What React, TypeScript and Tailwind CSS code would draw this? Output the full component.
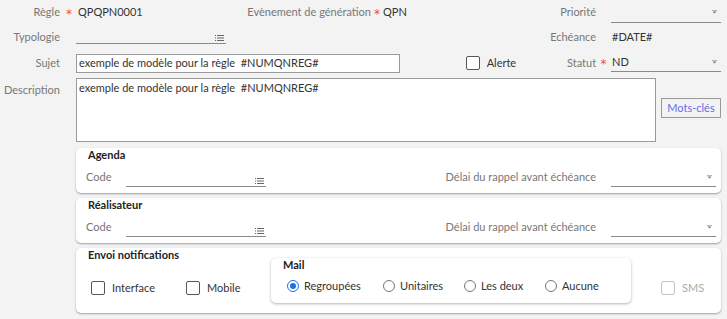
import React from "react";

const ListIcon = () => (
  <svg width="9" height="6" viewBox="0 0 9 6" className="text-[#666]">
    <rect x="0" y="0" width="1" height="1" fill="currentColor" />
    <rect x="0" y="2.5" width="1" height="1" fill="currentColor" />
    <rect x="0" y="5" width="1" height="1" fill="currentColor" />
    <rect x="2" y="0" width="7" height="1" fill="currentColor" />
    <rect x="2" y="2.5" width="7" height="1" fill="currentColor" />
    <rect x="2" y="5" width="7" height="1" fill="currentColor" />
  </svg>
);

const Caret = () => (
  <svg width="5" height="4" viewBox="0 0 5 4" className="text-[#777]">
    <rect x="0" y="0" width="5" height="1" fill="currentColor" opacity="0.5" />
    <path d="M0.5 1.5 L4.5 1.5 L2.5 3.5 Z" fill="currentColor" />
  </svg>
);

const Star = () => (
  <span className="text-[#ef4a4a] font-['DejaVu_Sans',sans-serif] text-[12px] leading-none">*</span>
);

function Select({ value, className }: { value?: string; className: string }) {
  return (
    <div className={`flex items-center justify-between border-b border-[#8a8a8a] ${className}`}>
      <span className="pl-[1px] text-[#333]">{value}</span>
      <span className="pr-[4px]"><Caret /></span>
    </div>
  );
}

function LookupInput({ className }: { className: string }) {
  return (
    <div className={`flex items-end justify-end border-b border-[#8a8a8a] pb-[2px] pr-[2px] ${className}`}>
      <ListIcon />
    </div>
  );
}

function Checkbox({ light }: { light?: boolean }) {
  return (
    <div
      className={`w-[14px] h-[14px] rounded-[2px] bg-white border ${light ? "border-[#c4c4c4]" : "border-[#555]"}`}
    />
  );
}

function Radio({ checked }: { checked?: boolean }) {
  return checked ? (
    <div className="w-[12px] h-[12px] rounded-full border-[1.5px] border-[#1a73e8] bg-white flex items-center justify-center">
      <div className="w-[6px] h-[6px] rounded-full bg-[#1a73e8]" />
    </div>
  ) : (
    <div className="w-[12px] h-[12px] rounded-full border border-[#777] bg-white" />
  );
}

function CodePanel({ title }: { title: string }) {
  return (
    <div className="ml-[76px] w-[645px] h-[45px] bg-white rounded-[5px] shadow-[0_1px_2px_rgba(0,0,0,0.35)]">
      <div className="pl-[12px] leading-[14px] font-bold text-[#222]">{title}</div>
      <div className="mt-[3px] h-[24px] flex items-center pl-[10px] pr-[5px]">
        <div className="w-[40px] text-[#777]">Code</div>
        <LookupInput className="w-[140px] h-[20px]" />
        <div className="flex-1" />
        <div className="text-[#777] whitespace-nowrap">Délai du rappel avant échéance</div>
        <Select className="ml-[15px] w-[105px] h-[20px]" />
      </div>
    </div>
  );
}

export default function App() {
  return (
    <div className="w-[727px] h-[319px] bg-[#f3f3f3] font-['Lato',sans-serif] text-[11px] leading-[14px] text-[#333] overflow-hidden whitespace-nowrap">
      {/* Ligne 1 */}
      <div className="h-[24px] flex items-center pr-[6px]">
        <div className="w-[60px] text-right text-[#777]">Règle</div>
        <div className="w-[18px] flex justify-center pt-[3px]"><Star /></div>
        <div className="w-[163px]">QPQPN0001</div>
        <div className="w-[130px] text-right text-[#777]">Evènement de génération</div>
        <div className="w-[12px] flex justify-center pt-[3px]"><Star /></div>
        <div className="flex-1">QPN</div>
        <div className="w-[80px] text-right text-[#777]">Priorité</div>
        <div className="w-[15px]" />
        <Select className="w-[110px] h-[22px]" />
      </div>

      {/* Ligne 2 */}
      <div className="h-[26px] flex items-center pr-[6px]">
        <div className="w-[60px] text-right text-[#777]">Typologie</div>
        <div className="w-[16px]" />
        <LookupInput className="w-[150px] h-[12px] mt-[1px]" />
        <div className="flex-1" />
        <div className="w-[80px] text-right text-[#777]">Echéance</div>
        <div className="w-[15px]" />
        <div className="w-[110px] pl-[1px]">#DATE#</div>
      </div>

      {/* Ligne 3 */}
      <div className="h-[25px] flex items-center pr-[6px]">
        <div className="w-[60px] text-right text-[#777]">Sujet</div>
        <div className="w-[16px]" />
        <div className="w-[324px] h-[19px] mt-[1px] bg-white border border-[#9a9a9a] pl-[2px] flex items-center">
          exemple de modèle pour la règle&nbsp; #NUMQNREG#
        </div>
        <div className="ml-[66px] flex items-center gap-[7px]">
          <Checkbox />
          <span>Alerte</span>
        </div>
        <div className="flex-1" />
        <div className="w-[80px] text-right text-[#777]">Statut</div>
        <div className="w-[15px] flex justify-center pt-[3px]"><Star /></div>
        <Select value="ND" className="w-[110px] h-[18px]" />
      </div>

      {/* Description */}
      <div className="mt-[3px] flex items-center pr-[6px]">
        <div className="w-[60px] self-start pt-[5px] text-right text-[#777]">Description</div>
        <div className="w-[16px]" />
        <div className="w-[580px] h-[64px] bg-white border border-[#9a9a9a] pl-[2px] pt-[2px]">
          exemple de modèle pour la règle&nbsp; #NUMQNREG#
        </div>
        <div className="ml-[5px] w-[60px] h-[20px] mb-[4px] border border-[#9a9a9a] flex items-center justify-center text-[#6a6af0]">
          Mots-clés
        </div>
      </div>

      <div className="mt-[6px] flex flex-col gap-[5px]">
        <CodePanel title="Agenda" />
        <CodePanel title="Réalisateur" />

        {/* Envoi notifications */}
        <div className="ml-[76px] w-[645px] h-[65px] bg-white rounded-[5px] shadow-[0_1px_2px_rgba(0,0,0,0.35)] flex">
          <div className="w-[195px] pl-[12px]">
            <div className="leading-[13px] font-bold text-[#222]">Envoi notifications</div>
            <div className="mt-[20px] h-[14px] flex items-center pl-[3px]">
              <div className="w-[95px] flex items-center gap-[7px]">
                <Checkbox />
                <span>Interface</span>
              </div>
              <div className="flex items-center gap-[7px]">
                <Checkbox />
                <span>Mobile</span>
              </div>
            </div>
          </div>
          <div className="mt-[10px] w-[360px] h-[45px] bg-white rounded-[5px] shadow-[0_1px_3px_rgba(0,0,0,0.3)]">
            <div className="pl-[12px] leading-[13px] font-bold text-[#222]">Mail</div>
            <div className="mt-[8px] h-[14px] flex items-center pl-[16px]">
              <div className="w-[96px] flex items-center gap-[5px]">
                <Radio checked />
                <span>Regroupées</span>
              </div>
              <div className="w-[81px] flex items-center gap-[5px]">
                <Radio />
                <span>Unitaires</span>
              </div>
              <div className="w-[81px] flex items-center gap-[5px]">
                <Radio />
                <span>Les deux</span>
              </div>
              <div className="flex items-center gap-[5px]">
                <Radio />
                <span>Aucune</span>
              </div>
            </div>
          </div>
          <div className="ml-[30px] mt-[33px] h-[14px] flex items-center gap-[7px]">
            <Checkbox light />
            <span className="text-[#aaa]">SMS</span>
          </div>
        </div>
      </div>
    </div>
  );
}
